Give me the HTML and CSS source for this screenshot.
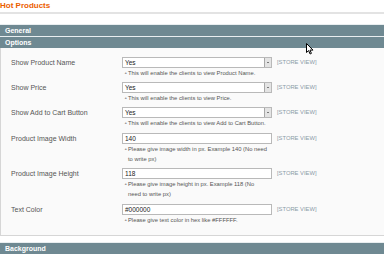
FILE: index.html
```
<!DOCTYPE html>
<html lang="en">
<head>
    <meta charset="UTF-8">
    <title>Hot Products</title>
    <link rel="stylesheet" href="styles.css">
</head>
<body>
    <h3 class="page-title">Hot Products</h3>

    <div class="section-head">General</div>
    <div class="section-head">Options</div>

    <!-- Options fieldset -->
    <div class="fieldset">
        <div class="field-row">
            <label>Show Product Name</label>
            <div class="value">
                <div class="select">Yes<span class="select-btn"></span></div>
                <p class="note"><span class="note-icon">▲</span>This will enable the clients to view Product Name.</p>
            </div>
            <span class="scope">[STORE VIEW]</span>
        </div>
        <div class="field-row">
            <label>Show Price</label>
            <div class="value">
                <div class="select">Yes<span class="select-btn"></span></div>
                <p class="note"><span class="note-icon">▲</span>This will enable the clients to view Price.</p>
            </div>
            <span class="scope">[STORE VIEW]</span>
        </div>
        <div class="field-row wide">
            <label>Show Add to Cart Button</label>
            <div class="value">
                <div class="select">Yes<span class="select-btn"></span></div>
                <p class="note"><span class="note-icon">▲</span>This will enable the clients to view Add to Cart Button.</p>
            </div>
            <span class="scope">[STORE VIEW]</span>
        </div>
        <div class="field-row">
            <label>Product Image Width</label>
            <div class="value">
                <div class="input">140</div>
                <p class="note"><span class="note-icon">▲</span>Please give image width in px. Example 140 (No need to write px)</p>
            </div>
            <span class="scope">[STORE VIEW]</span>
        </div>
        <div class="field-row wide">
            <label>Product Image Height</label>
            <div class="value">
                <div class="input">118</div>
                <p class="note"><span class="note-icon">▲</span>Please give image height in px. Example 118 (No need to write px)</p>
            </div>
            <span class="scope">[STORE VIEW]</span>
        </div>
        <div class="field-row">
            <label>Text Color</label>
            <div class="value">
                <div class="input">#000000</div>
                <p class="note"><span class="note-icon">▲</span>Please give text color in hex like #FFFFFF.</p>
            </div>
            <span class="scope">[STORE VIEW]</span>
        </div>
    </div>

    <div class="section-head">Background</div>

    <!-- mouse pointer -->
    <svg class="cursor" width="8" height="12" viewBox="0 0 8 12">
        <path d="M0.5 0.5 L0.5 9.5 L2.6 7.6 L4.1 11 L5.4 10.4 L4 7.1 L7 7.1 Z" fill="#fff" stroke="#000" stroke-width="1"/>
    </svg>
</body>
</html>
```

FILE: styles.css
```
body {
    margin: 0;
    font-family: "Liberation Sans", Arial, sans-serif;
    background: #fff;
    color: #444;
    position: relative;
}
.page-title {
    margin: 0 0 10px;
    height: 12px;
    line-height: 12px;
    font-size: 8px;
    font-weight: bold;
    color: #eb5e00;
    border-bottom: 2px solid #e3e3e3;
}
.section-head {
    height: 11px;
    line-height: 11px;
    padding-left: 5px;
    border-top: 1px solid #e9eef0;
    background: #6f8992;
    color: #fff;
    font-size: 7px;
    font-weight: bold;
}
.fieldset {
    background: #fafafa;
    border-left: 1px solid #d6d6d6;
    border-bottom: 1px solid #d6d6d6;
    padding: 9px 0 6px 10px;
    margin-bottom: 6px;
}
.field-row {
    display: grid;
    grid-template-columns: 111px 150px auto;
    padding-bottom: 4px;
}
.field-row.wide {
    padding-bottom: 5px;
}
.field-row label {
    font-size: 7px;
    line-height: 11px;
    color: #555;
}
.select,
.input {
    position: relative;
    box-sizing: border-box;
    height: 11px;
    line-height: 9px;
    padding-left: 2px;
    font-size: 6.5px;
    color: #222;
    background: #fff;
    border: 1px solid #b9b9b9;
}
.select-btn {
    position: absolute;
    right: 0;
    top: 0;
    width: 7px;
    height: 9px;
    box-sizing: border-box;
    background: #e4e4e4;
    border-left: 1px solid #a8a8a8;
}
.select-btn::after {
    content: "";
    position: absolute;
    left: 2px;
    top: 4px;
    border-left: 1.5px solid transparent;
    border-right: 1.5px solid transparent;
    border-top: 1.5px solid #111;
}
.note {
    margin: 0;
    padding: 0 5px 0 6px;
    font-size: 5.8px;
    line-height: 10px;
    color: #555;
}
.note-icon {
    display: inline-block;
    width: 4px;
    margin-left: -4px;
    font-size: 3.5px;
    color: #999;
    vertical-align: 1px;
}
.scope {
    margin-left: 5px;
    font-size: 5.8px;
    line-height: 11px;
    color: #8c9aa7;
}
.cursor {
    position: absolute;
    left: 306px;
    top: 43px;
}
```
